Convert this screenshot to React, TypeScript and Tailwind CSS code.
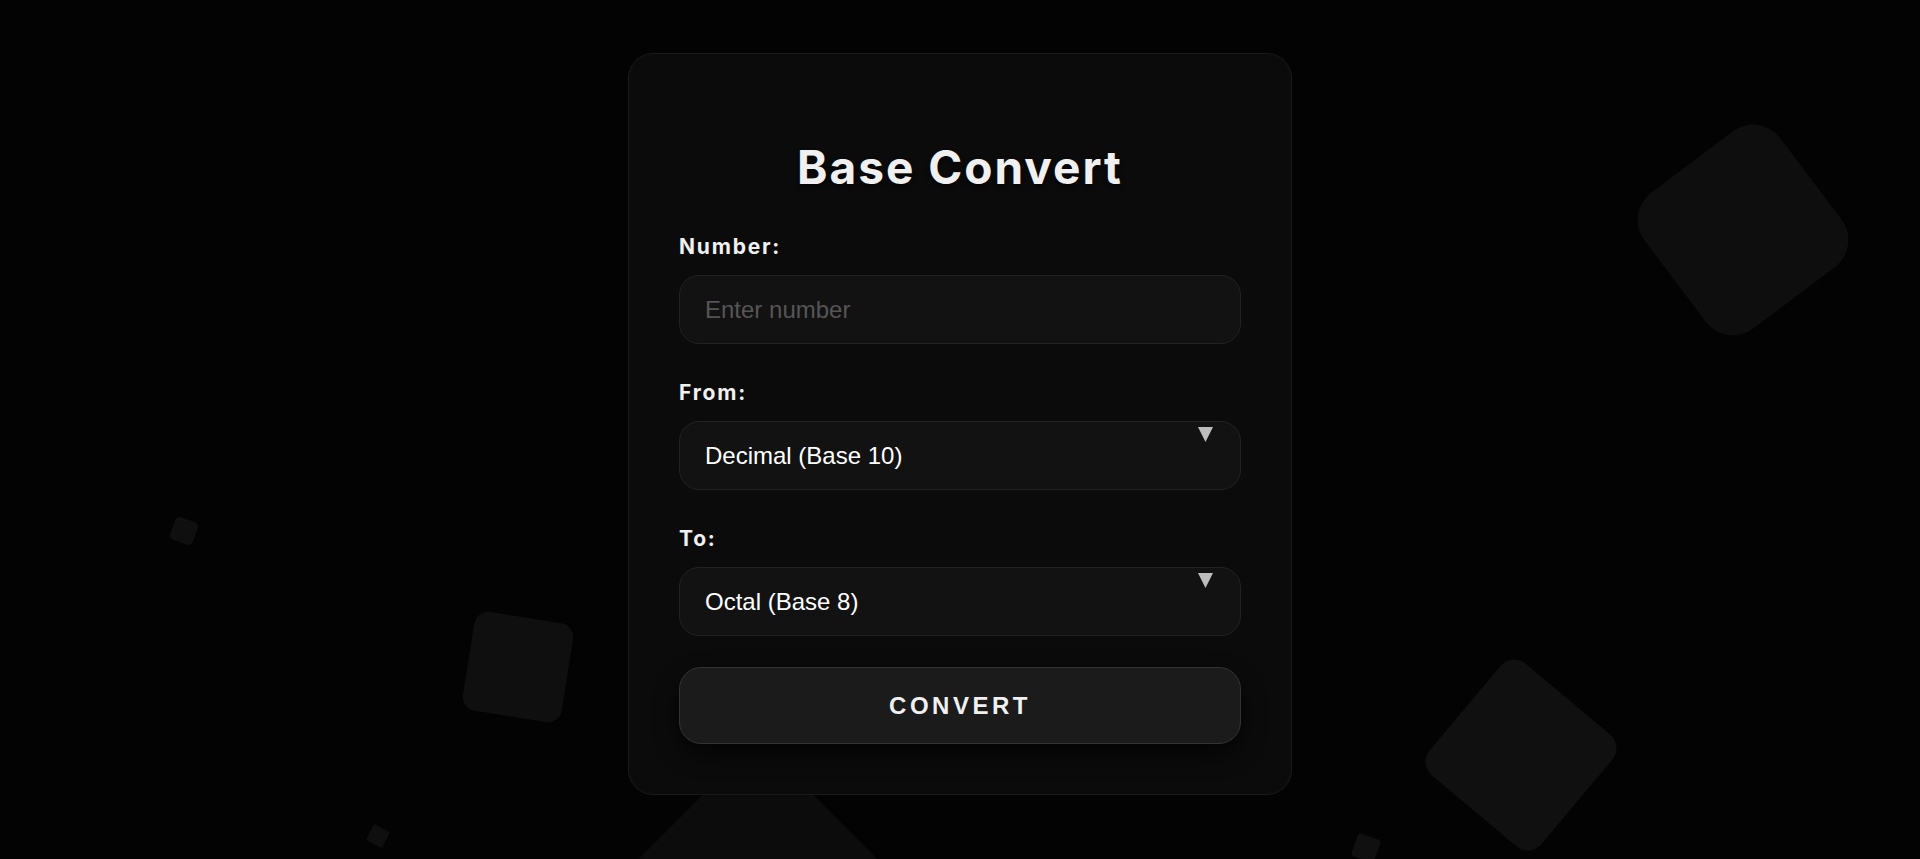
import { useState } from 'react'

const bases = [
  { value: '2', label: 'Binary (Base 2)' },
  { value: '8', label: 'Octal (Base 8)' },
  { value: '10', label: 'Decimal (Base 10)' },
  { value: '16', label: 'Hexadecimal (Base 16)' },
]

const fieldCls =
  "h-[69px] w-full rounded-[20px] border border-[#222] bg-[#121212] px-[25px] text-[24px] text-white outline-none [font-family:'Liberation_Sans',Arial,sans-serif]"

function BaseSelect({ value, onChange }: { value: string; onChange: (v: string) => void }) {
  return (
    <div className="relative">
      <select value={value} onChange={(e) => onChange(e.target.value)} className={`${fieldCls} appearance-none`}>
        {bases.map((b) => (
          <option key={b.value} value={b.value}>
            {b.label}
          </option>
        ))}
      </select>
      {/* arrow sits over the select */}
      <svg className="pointer-events-none absolute right-[28px] top-[6px] h-[15px] w-[15px]" viewBox="0 0 15 15">
        <polygon points="0,0 15,0 7.5,15" fill="#bdbdbd" />
      </svg>
    </div>
  )
}

function Field({ label, children }: { label: string; children: React.ReactNode }) {
  return (
    <div className="flex flex-col gap-[16px]">
      <label className="text-[21px] font-bold leading-[25px] tracking-[1.8px] text-[#f0f0f0] [font-family:Inter,'Noto_Sans',sans-serif]">
        {label}
      </label>
      {children}
    </div>
  )
}

export default function App() {
  const [num, setNum] = useState('')
  const [from, setFrom] = useState('10')
  const [to, setTo] = useState('8')

  return (
    <div className="relative h-[859px] w-full overflow-hidden bg-[#030303]">
      {/* floating background squares */}
      <div className="absolute left-[1658px] top-[145px] h-[170px] w-[170px] rotate-[-37deg] rounded-[34px] bg-[#0e0e0e]" />
      <div className="absolute left-[172px] top-[519px] h-[24px] w-[24px] rotate-[20deg] rounded-[5px] bg-[#0f0f0f]" />
      <div className="absolute left-[468px] top-[617px] h-[100px] w-[100px] rotate-[9deg] rounded-[14px] bg-[#0f0f0f]" />
      <div className="absolute left-[369px] top-[827px] h-[18px] w-[18px] rotate-[27deg] rounded-[2px] bg-[#0f0f0f]" />
      <div className="absolute left-[1448px] top-[682px] h-[146px] w-[146px] rotate-[40deg] rounded-[18px] bg-[#101010]" />
      <div className="absolute left-[1354px] top-[836px] h-[24px] w-[24px] rotate-[20deg] rounded-[3px] bg-[#101010]" />
      <div className="absolute left-[658px] top-[781px] h-[200px] w-[200px] rotate-45 bg-[#0c0c0c]" />

      <div className="relative flex justify-center pt-[53px]">
        <div className="flex w-[664px] flex-col rounded-[25px] border border-[#1a1a1a] bg-[#0b0b0b] px-[50px] pb-[50px] pt-[85px]">
          <h1 className="text-center text-[46px] font-bold leading-[56px] tracking-[2px] text-[#f0f0f0] [font-family:Inter,'Noto_Sans',sans-serif] [text-shadow:0_3px_5px_rgba(0,0,0,0.6)]">
            Base Convert
          </h1>

          <div className="mt-[39px] flex flex-col gap-[36px]">
            <Field label="Number:">
              <input
                value={num}
                onChange={(e) => setNum(e.target.value)}
                placeholder="Enter number"
                className={`${fieldCls} placeholder:text-[#555]`}
              />
            </Field>
            <Field label="From:">
              <BaseSelect value={from} onChange={setFrom} />
            </Field>
            <Field label="To:">
              <BaseSelect value={to} onChange={setTo} />
            </Field>
          </div>

          <button
            type="button"
            className="mt-[31px] flex h-[77px] w-full items-center justify-center rounded-[22px] border border-[#333] bg-[#1b1b1b] text-[24px] font-bold tracking-[3.5px] text-[#f0f0f0] shadow-[0_10px_22px_rgba(0,0,0,0.65)] [font-family:'Liberation_Sans',Arial,sans-serif]"
          >
            CONVERT
          </button>
        </div>
      </div>
    </div>
  )
}
